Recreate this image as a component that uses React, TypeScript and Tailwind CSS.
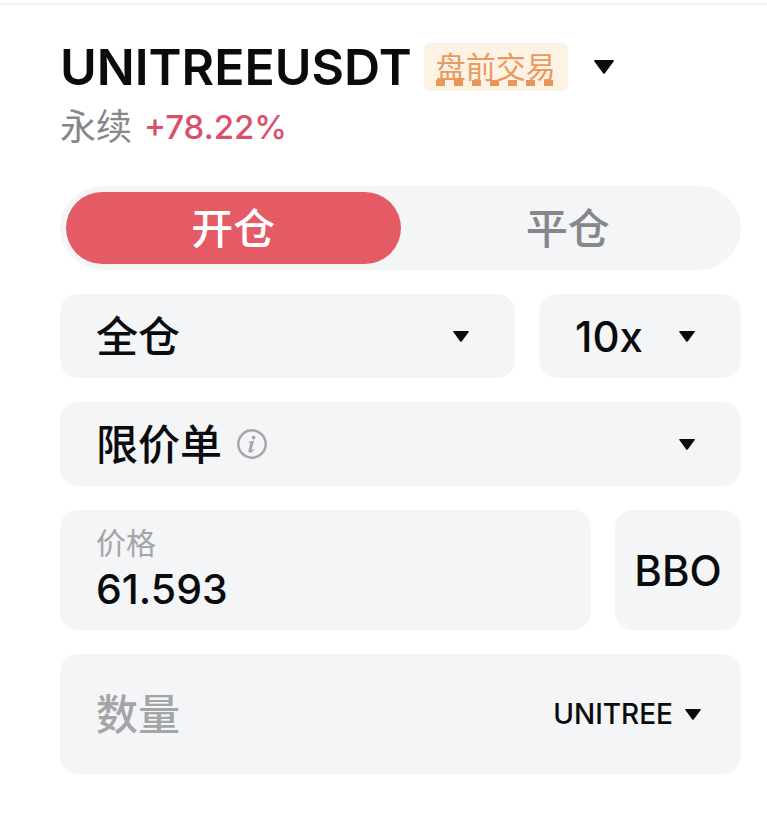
import { useState } from 'react';
import clsx from 'clsx';

type Side = 'open' | 'close';

const TABS: { id: Side; label: string }[] = [
  { id: 'open', label: '开仓' },
  { id: 'close', label: '平仓' },
];

function Caret({ className }: { className?: string }) {
  return (
    <svg viewBox="0 0 20 14" className={clsx('pointer-events-none', className)} fill="currentColor" aria-hidden="true">
      <path d="M0.8 0h18.4c0.7 0 1 0.8 0.6 1.3l-8.9 12c-0.5 0.7-1.3 0.7-1.8 0l-8.9-12C-0.2 0.8 0.1 0 0.8 0z" />
    </svg>
  );
}

function InfoIcon() {
  return (
    <svg viewBox="0 0 30 30" className="size-[30px]" fill="none" aria-hidden="true">
      <circle cx="15" cy="15" r="13.7" stroke="#a3a5a9" strokeWidth="2.4" />
      <circle cx="16.6" cy="8.6" r="1.9" fill="#a3a5a9" />
      <path
        d="M11.8 12.7c1.8-0.2 3.6-0.6 5.3-1.1l-2.5 9.1c-0.2 0.8 0.1 1 0.6 0.7c0.6-0.3 1.1-0.9 1.6-1.6l0.6 0.4c-1.1 1.9-2.6 3.4-4.3 3.4c-1.5 0-2-1-1.6-2.5l1.7-6.3c0.2-0.8-0.2-1-1.5-1z"
        fill="#a3a5a9"
      />
    </svg>
  );
}

export default function OrderForm() {
  const [side, setSide] = useState<Side>('open');
  const [price, setPrice] = useState('61.593');
  const [amount, setAmount] = useState('');

  return (
    <main className="min-h-screen bg-white pt-[3px] font-['Inter','Noto_Sans_CJK_SC',sans-serif] text-[#0a0b0d]">
      <div className="h-[2px] bg-[#f1f1f2]" />

      <div className="pt-9 pr-[26px] pl-[60px]">
        {/* Symbol */}
        <header>
          <div className="flex h-[52px] items-center">
            <h1 className="text-[50px] leading-[52px] font-semibold">UNITREEUSDT</h1>
            <span className="ml-3 flex h-12 items-center rounded-md bg-[#fdf2e3] px-3 text-[30px] leading-[38px] text-[#e89a5f]">
              <span className="relative">
                盘前交易
                <span className="absolute inset-x-0 bottom-0 h-[6px] bg-[repeating-linear-gradient(90deg,#e8965a_0_9px,transparent_9px_18px)]" />
              </span>
            </span>
            <button type="button" aria-label="选择合约" className="ml-[26px]">
              <Caret className="h-[14px] w-5" />
            </button>
          </div>
          <p className="mt-3 flex items-center gap-3 text-[36px] leading-[44px]">
            <span className="text-[#85878b]">永续</span>
            <span className="text-[33px] font-medium text-[#d9506a]">+78.22%</span>
          </p>
        </header>

        <form className="mt-[37px] flex flex-col gap-6 text-[42px]" onSubmit={(e) => e.preventDefault()}>
          {/* Open / close */}
          <div role="tablist" className="flex h-[84px] rounded-full bg-[#f4f5f7] p-[6px]">
            {TABS.map((tab) => (
              <button
                key={tab.id}
                type="button"
                role="tab"
                aria-selected={side === tab.id}
                onClick={() => setSide(tab.id)}
                className={clsx(
                  'flex-1 rounded-full font-medium',
                  side === tab.id ? 'bg-[#e45a65] text-white' : 'text-[#85878b]'
                )}
              >
                {tab.label}
              </button>
            ))}
          </div>

          {/* Margin mode + leverage */}
          <div className="flex gap-6">
            <div className="relative h-[84px] flex-1">
              <select aria-label="仓位模式" className="size-full appearance-none rounded-[18px] bg-[#f4f5f7] px-9 font-medium">
                <option>全仓</option>
              </select>
              <Caret className="absolute top-[37px] right-[46px] h-[11px] w-4" />
            </div>
            <div className="relative h-[84px] w-[202px]">
              <select aria-label="杠杆" className="size-full appearance-none rounded-[18px] bg-[#f4f5f7] px-9 font-medium">
                <option>10x</option>
              </select>
              <Caret className="absolute top-[37px] right-[46px] h-[11px] w-4" />
            </div>
          </div>

          {/* Order type */}
          <div className="relative flex h-[84px] items-center rounded-[18px] bg-[#f4f5f7] pl-9">
            <select aria-label="委托类型" className="absolute inset-0 appearance-none rounded-[18px] px-9 font-medium">
              <option>限价单</option>
            </select>
            <button type="button" aria-label="说明" className="relative ml-[141px]">
              <InfoIcon />
            </button>
            <Caret className="absolute top-[37px] right-[46px] h-[11px] w-4" />
          </div>

          {/* Price */}
          <div className="flex gap-6">
            <div className="flex h-[120px] min-w-0 flex-1 flex-col rounded-[18px] bg-[#f4f5f7] px-9 pt-3">
              <label htmlFor="price" className="text-[30px] leading-[42px] text-[#a3a5a9]">
                价格
              </label>
              <input
                id="price"
                inputMode="decimal"
                value={price}
                onChange={(e) => setPrice(e.target.value)}
                className="h-[52px] w-full text-[41px] font-medium outline-none"
              />
            </div>
            <button type="button" className="h-[120px] w-[126px] rounded-[18px] bg-[#f4f5f7] font-medium">
              BBO
            </button>
          </div>

          {/* Amount */}
          <div className="flex h-[120px] items-center rounded-[18px] bg-[#f4f5f7] pr-10 pl-9">
            <input
              aria-label="数量"
              placeholder="数量"
              inputMode="decimal"
              value={amount}
              onChange={(e) => setAmount(e.target.value)}
              className="h-16 min-w-0 flex-1 font-medium outline-none placeholder:text-[#a3a5a9]"
            />
            <div className="relative flex h-12 items-center">
              <select aria-label="单位" className="h-full appearance-none pr-7 text-[28px] leading-[48px] font-medium [field-sizing:content]">
                <option>UNITREE</option>
              </select>
              <Caret className="absolute right-0 h-[11px] w-4" />
            </div>
          </div>
        </form>
      </div>
    </main>
  );
}
